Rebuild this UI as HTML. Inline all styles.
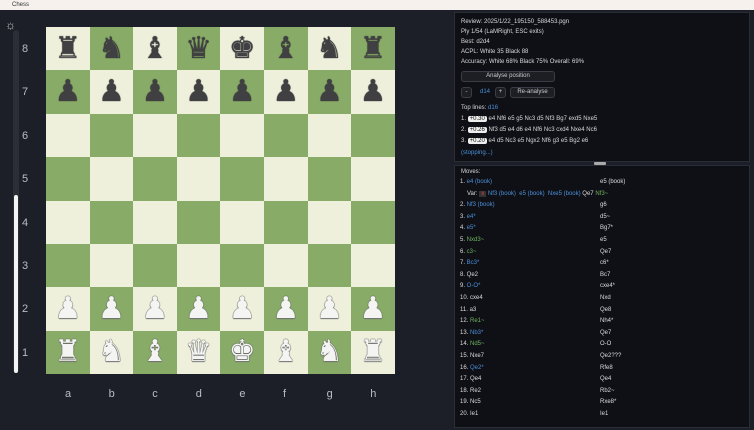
<!DOCTYPE html><html><head><style>
*{margin:0;padding:0;box-sizing:border-box}
body{width:754px;height:430px;background:#1d1f28;position:relative;overflow:hidden;font-family:"Liberation Sans",sans-serif}
.title{position:absolute;left:0;top:0;width:754px;height:10px;background:#f6f1ec;font-size:6px;color:#333;line-height:10px;padding-left:12px}
.sq{position:absolute;width:43.6px;height:43.4px;display:flex;align-items:center;justify-content:center;font-family:"DejaVu Sans",sans-serif;font-size:30px;line-height:1}
.l{background:#eef0dc}.d{background:#88ab68}
.b{color:#404042;text-shadow:0 0 1px #222}
.w{color:#f4f4f2;text-shadow:0 0 1px #666,0 0 1px #666,0 0 1px #666,0 1px 1px #777}
.rank{position:absolute;left:22px;color:#b8bcc4;font-size:11px}
.file{position:absolute;top:388px;color:#b8bcc4;font-size:11px}
.panel{position:absolute;left:454px;width:296px;background:#0e1016;border:1px solid #2a2d36}
.t{position:absolute;left:6px;font-size:6px;color:#d8d8d8;white-space:nowrap}
.bl{color:#4d8fd6}.gr{color:#6fb35c}.rd{color:#d04040}
.btn{position:absolute;background:#1c1e24;border:1px solid #3a3d46;border-radius:3px;font-size:6px;color:#ccc;text-align:center;line-height:9px;height:11px}
.ev{background:#eee;color:#111;padding:0 2px;border-radius:2px}
.mv{position:absolute;font-size:6px;color:#dcdcdc;white-space:nowrap}
</style></head><body>
<div class="title">Chess</div>
<div style="position:absolute;left:5px;top:18px;color:#ccc;font-size:12px">☼</div>
<div style="position:absolute;left:13px;top:30px;width:6px;height:343px;background:#2b2e36;border-radius:3px"></div>
<div style="position:absolute;left:14px;top:195px;width:4px;height:178px;background:#f4f4f4;border-radius:2px"></div>
<div id="board"></div>
<div class="panel" style="top:12px;height:150px">
<div class="t" style="top:6px">Review: 2025/1/22_195150_588453.pgn</div>
<div class="t" style="top:16px">Ply 1/54 (LaMRight, ESC exits)</div>
<div class="t" style="top:26px">Best: d2d4</div>
<div class="t" style="top:36px">ACPL: White 35 Black 88</div>
<div class="t" style="top:46px">Accuracy: White 68% Black 75% Overall: 69%</div>
<div class="btn" style="left:6px;top:58px;width:94px">Analyse position</div>
<div class="btn" style="left:6px;top:74px;width:11px">-</div>
<div class="t bl" style="left:25px;top:76px">d14</div>
<div class="btn" style="left:40px;top:74px;width:11px">+</div>
<div class="btn" style="left:55px;top:74px;width:45px">Re-analyse</div>
<div class="t" style="top:92px">Top lines: <span class="bl">d16</span></div>
<div class="t" style="top:103px">1. <span class="ev">+0.30</span> e4 Nf6 e5 g5 Nc3 d5 Nf3 Bg7 exd5 Nxe5</div>
<div class="t" style="top:114px">2. <span class="ev">+0.26</span> Nf3 d5 e4 d6 e4 Nf6 Nc3 cxd4 Nxe4 Nc6</div>
<div class="t" style="top:125px">3. <span class="ev">+0.20</span> e4 d5 Nc3 e5 Ngx2 Nf6 g3 e5 Bg2 e6</div>
<div class="t bl" style="top:137px">(stopping...)</div>
</div>
<div style="position:absolute;left:594px;top:162px;width:12px;height:3px;background:#aaa;border-radius:1px"></div>
<div class="panel" style="top:165px;height:263px">
<div class="t" style="top:3px">Moves:</div>
</div>
<div id="moves"></div>
<script>
const B=document.getElementById('board');let h='';
const back=['♜','♞','♝','♛','♚','♝','♞','♜'];
for(let r=0;r<8;r++)for(let c=0;c<8;c++){
 let p='',cl='';
 if(r==0){p=back[c];cl='b'}else if(r==1){p='♟';cl='b'}else if(r==6){p='♟';cl='w'}else if(r==7){p=back[c];cl='w'}
 h+=`<div class="sq ${(r+c)%2?'d':'l'} ${cl}" style="left:${46+c*43.6}px;top:${27+r*43.4}px">${p}</div>`;
}
for(let r=0;r<8;r++)h+=`<div class="rank" style="top:${43+r*43.4}px">${8-r}</div>`;
'abcdefgh'.split('').forEach((f,i)=>h+=`<div class="file" style="left:${65+i*43.6}px">${f}</div>`);
B.innerHTML=h;
const mv=[["e4 (book)","bl","e5 (book)","bl"],["Nf3 (book)","bl","g6",""],["e4*","bl","d5~","gr"],["e5*","bl","Bg7*","bl"],["Nxd3~","gr","e5",""],["c3~","gr","Qe7",""],["Bc3*","bl","c6*","bl"],["Qe2","","Bc7",""],["O-O*","bl","cxe4*","bl"],["cxe4","","Nxd",""],["a3","","Qe8",""],["Re1~","gr","Nh4*","bl"],["Nb3*","bl","Qe7",""],["Nd5~","gr","O-O",""],["Nxe7","","Qe2???","rd"],["Qe2*","bl","Rfe8",""],["Qe4","","Qe4",""],["Re2","","Rb2~","gr"],["Nc5","","Rxe8*","bl"],["Ie1","","Ie1",""]];
let m='';
mv.forEach((x,i)=>{let y=179+i*11.6+(i>0?11.6:0);
m+=`<div class="mv" style="left:460px;top:${y}px">${i+1}. <span class="${x[1]}">${x[0]}</span></div><div class="mv ${x[3]}" style="left:600px;top:${y}px">${x[2]}</div>`;});
m+=`<div class="mv" style="left:467px;top:190.6px">Var: <span style="background:#333;color:#d04040;padding:0 2px">x</span> <span class="bl">Nf3 (book)&nbsp; e5 (book)&nbsp; Nxe5 (book)</span> <span style="color:#ddd">Qe7</span> <span class="gr">Nf3~</span></div>`;
document.getElementById('moves').innerHTML=m;
</script>
</body></html>
